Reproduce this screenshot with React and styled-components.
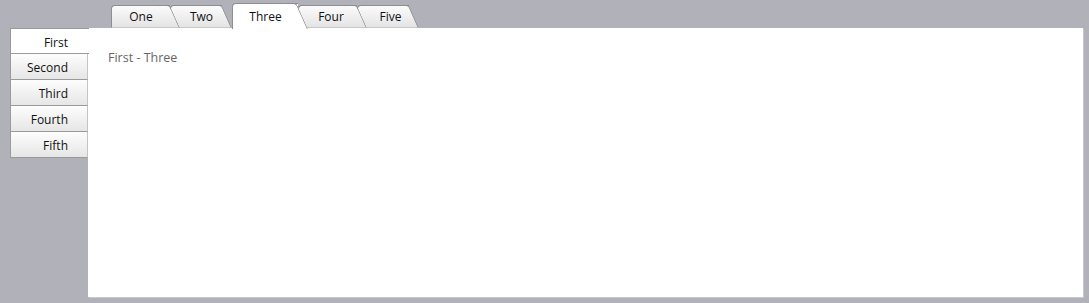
import React, { useState } from 'react'
import styled, { createGlobalStyle } from 'styled-components'

const GlobalStyle = createGlobalStyle`
  html, body {
    margin: 0;
    padding: 0;
    background: #b1b1b9;
  }
  body {
    font-family: "Open Sans", "Liberation Sans", sans-serif;
    font-size: 12px;
  }
`

const Page = styled.div`
  width: 1089px;
  height: 303px;
  display: flex;
  flex-direction: column;
  background: #b1b1b9;
`

const TabRow = styled.div`
  height: 28px;
  display: flex;
  align-items: flex-end;
  padding-left: 111px;
  position: relative;
  z-index: 2;
`

const Tab = styled.div`
  position: relative;
  z-index: ${p => (p.$active ? 20 : p.$z)};
  width: ${p => p.$w}px;
  height: ${p => (p.$active ? 26 : 23)}px;
  margin-right: 10px;
  margin-bottom: ${p => (p.$active ? -1 : 0)}px;
  box-sizing: border-box;
  border: 1px solid #8e8e8e;
  border-right: none;
  border-bottom: ${p => (p.$active ? 'none' : '1px solid #c9c9c9')};
  border-top-left-radius: 4px;
  background: ${p =>
    p.$active ? '#ffffff' : 'linear-gradient(#fbfbfb, #e4e4e4)'};
  display: flex;
  align-items: center;
  justify-content: center;
  padding-top: ${p => (p.$active ? 1 : 0)}px;
  padding-left: ${p => Math.max(p.$shift, 0)}px;
  padding-right: ${p => Math.max(-p.$shift, 0)}px;
  color: #111111;
  cursor: pointer;

  &::before {
    content: ${p => (p.$first || p.$active ? 'none' : "''")};
    position: absolute;
    top: -1px;
    bottom: -1px;
    left: -11px;
    width: 14px;
    box-sizing: border-box;
    border-top: 1px solid #8e8e8e;
    border-left: 1px solid #8e8e8e;
    border-bottom: 1px solid #c9c9c9;
    border-top-left-radius: 4px;
    background: linear-gradient(#fbfbfb, #e4e4e4);
    z-index: -1;
  }

  &::after {
    content: '';
    position: absolute;
    top: -1px;
    bottom: ${p => (p.$active ? 0 : -1)}px;
    left: calc(100% - 2px);
    width: 12px;
    box-sizing: border-box;
    border-top: 1px solid #8e8e8e;
    border-right: 1px solid #8e8e8e;
    border-bottom: ${p => (p.$active ? 'none' : '1px solid #c9c9c9')};
    border-top-right-radius: 3px;
    background: ${p =>
      p.$active ? '#ffffff' : 'linear-gradient(#fbfbfb, #e4e4e4)'};
    transform-origin: bottom left;
    transform: skewX(24deg);
  }
`

const TabLabel = styled.span`
  position: relative;
  z-index: 1;
  line-height: 1;
`

const Body = styled.div`
  flex: 1;
  display: flex;
  padding: 0 6px 6px 10px;
`

const SideList = styled.div`
  width: 78px;
  display: flex;
  flex-direction: column;
  position: relative;
  z-index: 1;
`

const SideItem = styled.div`
  height: 26px;
  flex: none;
  box-sizing: border-box;
  border: 1px solid #9a9a9a;
  border-top: ${p => (p.$first ? '1px solid #9a9a9a' : 'none')};
  border-right: ${p => (p.$active ? 'none' : '1px solid #c4c4c4')};
  width: ${p => (p.$active ? 79 : 78)}px;
  background: ${p =>
    p.$active ? '#ffffff' : 'linear-gradient(#fdfdfd, #e6e6e6)'};
  display: flex;
  align-items: center;
  justify-content: flex-end;
  padding-top: 2px;
  padding-right: ${p => (p.$active ? 21 : 19)}px;
  color: #111111;
  cursor: pointer;
`

const Panel = styled.div`
  flex: 1;
  background: #ffffff;
  box-shadow: 1px 1px 0 #c8c8ce;
  padding: 21px 20px;
  box-sizing: border-box;
  color: #666666;
  font-size: 12.5px;
`

const tabs = [
  { name: 'One', w: 59, shift: 0 },
  { name: 'Two', w: 42, shift: 0 },
  { name: 'Three', w: 66, shift: 0 },
  { name: 'Four', w: 49, shift: -4 },
  { name: 'Five', w: 42, shift: 4 },
]

const items = ['First', 'Second', 'Third', 'Fourth', 'Fifth']

export default function App() {
  const [tab, setTab] = useState(2)
  const [item, setItem] = useState(0)

  return (
    <Page>
      <GlobalStyle />
      <TabRow>
        {tabs.map((t, i) => (
          <Tab
            key={t.name}
            $w={t.w}
            $shift={t.shift}
            $z={10 - i}
            $first={i === 0}
            $active={i === tab}
            onClick={() => setTab(i)}
          >
            <TabLabel>{t.name}</TabLabel>
          </Tab>
        ))}
      </TabRow>
      <Body>
        <SideList>
          {items.map((name, i) => (
            <SideItem
              key={name}
              $first={i === 0}
              $active={i === item}
              onClick={() => setItem(i)}
            >
              {name}
            </SideItem>
          ))}
        </SideList>
        <Panel>
          {items[item]} - {tabs[tab].name}
        </Panel>
      </Body>
    </Page>
  )
}
